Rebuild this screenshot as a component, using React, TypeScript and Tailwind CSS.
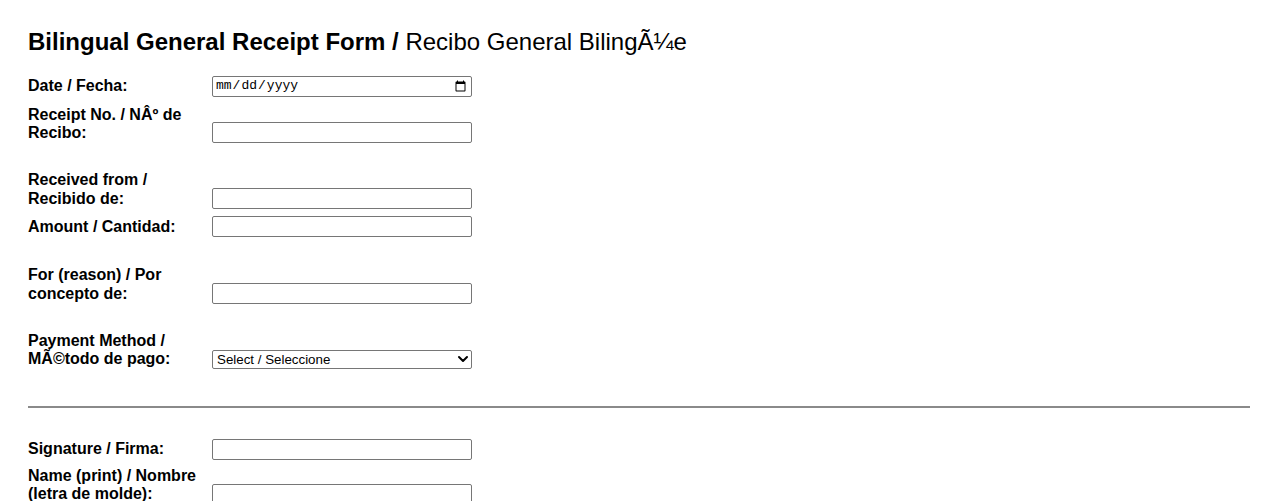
import { ChevronDown } from 'lucide-react'

const inputCls =
  'h-[21px] w-[260px] rounded-[2px] border border-[#767676] bg-white px-[2px] text-[13.33px] text-black'

function Row({
  label,
  mt,
  mb = 'mb-px',
  children,
}: {
  label: string
  mt: string
  mb?: string
  children: React.ReactNode
}) {
  return (
    <div className={`flex items-end ${mt}`}>
      <label className={`w-[184px] shrink-0 pr-[10px] text-[16px] font-bold leading-[18.4px] ${mb}`}>{label}</label>
      {children}
    </div>
  )
}

export default function App() {
  return (
    <div className="min-h-[501px] bg-white px-[28px] pt-[28px] text-black [font-family:'Liberation_Sans',Arial,sans-serif]">
      <h2 className="text-[24px] leading-[27.6px]">
        <span className="font-bold">Bilingual General Receipt Form /</span> Recibo General BilingÃ¼e
      </h2>

      <form className="mt-[20px]">
        <Row label="Date / Fecha:" mt="mt-0">
          <input
            type="date"
            className={`${inputCls} text-[13px] [font-family:'Liberation_Mono',monospace]`}
          />
        </Row>
        <Row label="Receipt No. / NÂº de Recibo:" mt="mt-[9px]">
          <input type="text" className={inputCls} />
        </Row>
        <Row label="Received from / Recibido de:" mt="mt-[28px]">
          <input type="text" className={inputCls} />
        </Row>
        <Row label="Amount / Cantidad:" mt="mt-[7px]">
          <input type="text" className={inputCls} />
        </Row>
        <Row label="For (reason) / Por concepto de:" mt="mt-[29px]">
          <input type="text" className={inputCls} />
        </Row>
        <Row label="Payment Method / MÃ©todo de pago:" mt="mt-[28px]" mb="mb-0">
          <div className="relative">
            <select className="block h-[19px] w-[260px] appearance-none rounded-[2px] border border-[#767676] bg-white pl-[4px] text-[13.33px] leading-[17px] text-black">
              <option>Select / Seleccione</option>
              <option>Cash / Efectivo</option>
              <option>Check / Cheque</option>
              <option>Card / Tarjeta</option>
            </select>
            <ChevronDown
              className="pointer-events-none absolute right-[1px] top-px h-[16px] w-[16px]"
              strokeWidth={3}
            />
          </div>
        </Row>

        <div className="mt-[37px] h-[2px] bg-[#8a8a8a]" />

        <Row label="Signature / Firma:" mt="mt-[31px]">
          <input type="text" className={inputCls} />
        </Row>
        <Row label="Name (print) / Nombre (letra de molde):" mt="mt-[7px]">
          <input type="text" className={inputCls} />
        </Row>
      </form>
    </div>
  )
}
